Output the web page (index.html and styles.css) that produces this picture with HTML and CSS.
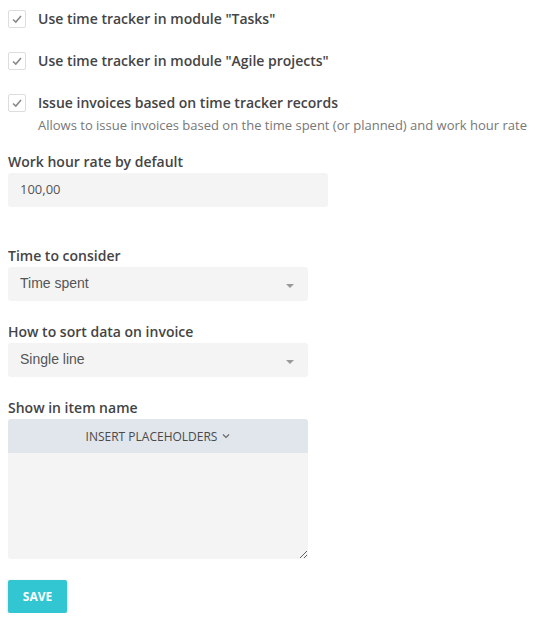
FILE: index.html
```html
<!DOCTYPE html>
<html lang="en">
<head>
  <meta charset="UTF-8">
  <meta name="viewport" content="width=device-width, initial-scale=1.0">
  <title>Time tracker settings</title>
  <link rel="stylesheet" href="styles.css">
</head>
<body>

  <form class="settings">
    <div class="option">
      <span class="checkbox"><svg width="12" height="10" viewBox="0 0 12 10"><path d="M2 5.5 L4.8 8 L10 2" fill="none" stroke="#888" stroke-width="1.6"/></svg></span>
      <div class="option-text">
        <div class="option-title">Use time tracker in module "Tasks"</div>
      </div>
    </div>

    <div class="option">
      <span class="checkbox"><svg width="12" height="10" viewBox="0 0 12 10"><path d="M2 5.5 L4.8 8 L10 2" fill="none" stroke="#888" stroke-width="1.6"/></svg></span>
      <div class="option-text">
        <div class="option-title">Use time tracker in module "Agile projects"</div>
      </div>
    </div>

    <div class="option option-last">
      <span class="checkbox"><svg width="12" height="10" viewBox="0 0 12 10"><path d="M2 5.5 L4.8 8 L10 2" fill="none" stroke="#888" stroke-width="1.6"/></svg></span>
      <div class="option-text">
        <div class="option-title">Issue invoices based on time tracker records</div>
        <div class="option-hint">Allows to issue invoices based on the time spent (or planned) and work hour rate</div>
      </div>
    </div>

    <div class="field field-rate">
      <label class="field-label">Work hour rate by default</label>
      <input class="text-input" type="text" value="100,00">
    </div>

    <div class="field">
      <label class="field-label">Time to consider</label>
      <div class="select"><span>Time spent</span><i class="caret"></i></div>
    </div>

    <div class="field">
      <label class="field-label">How to sort data on invoice</label>
      <div class="select"><span>Single line</span><i class="caret"></i></div>
    </div>

    <div class="field field-last">
      <label class="field-label">Show in item name</label>
      <div class="placeholder-bar">INSERT PLACEHOLDERS
        <svg width="8" height="6" viewBox="0 0 8 6"><path d="M1 1.5 L4 4.5 L7 1.5" fill="none" stroke="#666" stroke-width="1.1"/></svg>
      </div>
      <textarea class="item-name"></textarea>
    </div>

    <button type="button" class="save-btn">SAVE</button>
  </form>

</body>
</html>
```

FILE: styles.css
```css
body {
  margin: 0;
  padding: 0 8px;
  background-color: #fff;
  font-family: "Open Sans", Arial, sans-serif;
  color: #444;
}
.settings {
  padding-top: 10px;
}
.option {
  display: flex;
  align-items: flex-start;
  margin-bottom: 24px;
}
.option-last {
  margin-bottom: 18px;
}
.checkbox {
  width: 16px;
  height: 16px;
  border: 1px solid #ddd;
  border-radius: 2px;
  display: flex;
  align-items: center;
  justify-content: center;
  flex-shrink: 0;
  margin-right: 12px;
}
.option-title {
  font-size: 14px;
  font-weight: 600;
  line-height: 18px;
  color: #444;
}
.option-hint {
  font-size: 13px;
  line-height: 18px;
  margin-top: 4px;
  color: #777;
  white-space: nowrap;
}
.field {
  margin-bottom: 21px;
}
.field-rate {
  margin-bottom: 39px;
}
.field-last {
  margin-bottom: 21px;
}
.field-label {
  display: block;
  font-size: 14px;
  font-weight: 600;
  line-height: 20px;
  margin-bottom: 1px;
  color: #444;
}
.text-input {
  display: block;
  box-sizing: border-box;
  width: 320px;
  height: 34px;
  padding: 0 12px 2px;
  border: none;
  border-radius: 3px;
  background-color: #f4f4f4;
  font-family: "Open Sans", Arial, sans-serif;
  font-size: 13px;
  color: #555;
}
.select {
  box-sizing: border-box;
  width: 300px;
  height: 34px;
  padding: 0 12px 3px;
  border-radius: 3px;
  background-color: #f4f4f4;
  display: flex;
  align-items: center;
  justify-content: space-between;
  font-family: "Liberation Sans", Arial, sans-serif;
  font-size: 14px;
  color: #555;
}
.caret {
  width: 0;
  height: 0;
  border-left: 4px solid transparent;
  border-right: 4px solid transparent;
  border-top: 4px solid #999;
  margin-right: 2px;
  margin-top: 6px;
}
.placeholder-bar {
  box-sizing: border-box;
  width: 300px;
  height: 34px;
  background-color: #e1e5ec;
  border-radius: 3px 3px 0 0;
  display: flex;
  align-items: center;
  justify-content: center;
  gap: 5px;
  font-size: 12px;
  color: #4a4a4a;
}
.item-name {
  display: block;
  box-sizing: border-box;
  width: 300px;
  height: 106px;
  margin-top: 0;
  border: none;
  border-radius: 0 0 3px 3px;
  background-color: #f4f4f4;
  padding: 8px 12px;
}
.save-btn {
  margin: 0;
  width: 59px;
  height: 33px;
  border: none;
  border-radius: 2px;
  background-color: #32c5d2;
  color: #fff;
  font-family: "Open Sans", Arial, sans-serif;
  font-size: 12px;
  font-weight: 700;
  box-shadow: 0 1px 3px rgba(0, 0, 0, 0.2);
  cursor: pointer;
}
```
